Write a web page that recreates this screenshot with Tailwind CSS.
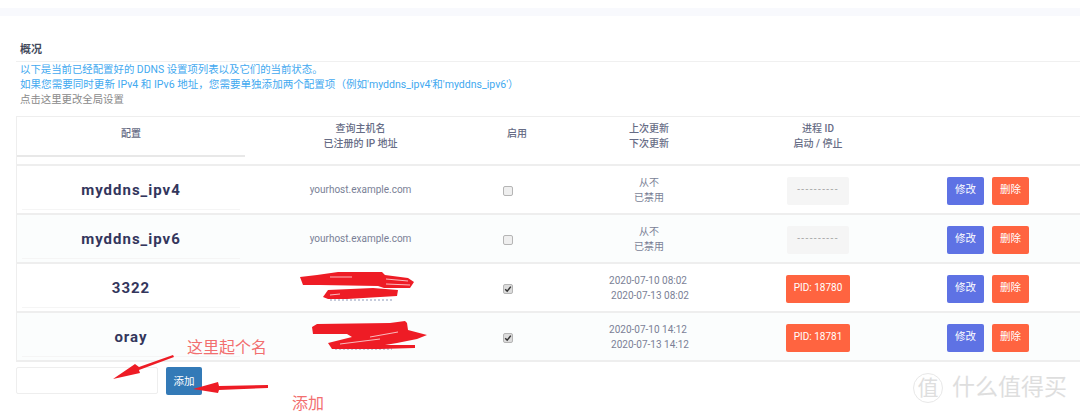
<!DOCTYPE html>
<html lang="en">
<head>
    <meta charset="UTF-8">
    <title>DDNS</title>
    <script src="https://cdn.jsdelivr.net/npm/@tailwindcss/browser@4"></script>
</head>
<body class="relative h-[412px] w-[1080px] overflow-hidden bg-white font-['Roboto','Noto_Sans_CJK_SC',sans-serif] text-[10px] leading-[15px] text-[#7a7f96]">
    <div class="mt-[8px] h-[8px] bg-[#f8f9fd]"></div>

    <h3 class="ml-[20px] mt-[26px] text-[11px] font-bold leading-[15px] text-[#444a5c]">概况</h3>
    <div class="ml-[16px] mt-[4px] border-t border-[#f0f0f0] pl-[4px] text-[10.4px]">
        <p class="text-[#42a9f0]">以下是当前已经配置好的 DDNS 设置项列表以及它们的当前状态。</p>
        <p class="text-[10.55px] text-[#42a9f0]">如果您需要同时更新 IPv4 和 IPv6 地址，您需要单独添加两个配置项（例如'myddns_ipv4'和'myddns_ipv6'）</p>
        <p class="text-[#8a8a8a]">点击这里更改全局设置</p>
    </div>

    <div class="ml-[16px] mt-[9px] border-t border-l border-[#eeeeee] text-center leading-[14.5px]">
        <!-- header -->
        <div class="grid h-[49px] grid-cols-[228px_231px_64px_218px_120px_1fr] items-center border-b-2 border-[#eeeeee] font-medium text-[#666c85]">
            <div class="flex h-[40px] items-center justify-center self-start border-b-2 border-[#e8e8e8] pb-[4px]">配置</div>
            <div class="self-start pt-[5px]"><p>查询主机名</p><p>已注册的 IP 地址</p></div>
            <div class="-mt-[13px] pl-[18px]">启用</div>
            <div class="self-start pt-[5px]"><p>上次更新</p><p>下次更新</p></div>
            <div class="self-start pt-[5px]"><p>进程 ID</p><p>启动 / 停止</p></div>
            <div></div>
        </div>

        <!-- rows -->
        <div class="grid h-[49px] grid-cols-[228px_231px_64px_218px_120px_1fr] items-center border-b-2 border-[#eeeeee] pt-[2px]">
            <div class="h-full pb-[3px] pl-[5px] pr-[5px]"><div class="flex h-full items-center justify-center border-b border-[#f5f5f5] pt-[4px] text-[15px] font-bold tracking-[1px] text-[#33365c]">myddns_ipv4</div></div>
            <div>yourhost.example.com</div>
            <div class="flex justify-center"><span class="block size-[10px] rounded-[2px] border border-[#b5b5b5] bg-[#efefef]"></span></div>
            <div><p>从不</p><p>已禁用</p></div>
            <div class="flex justify-center"><div class="flex h-[28px] w-[62px] items-center justify-center rounded-[2px] bg-[#f5f5f5] tracking-[1.4px] text-[#a5a5a5]">----------</div></div>
            <div class="flex justify-end gap-[8px] pr-[51px] text-[10.5px]"><a class="flex h-[28px] w-[37px] items-center justify-center rounded-[2px] bg-[#5e72e4] text-white">修改</a><a class="flex h-[28px] w-[37px] items-center justify-center rounded-[2px] bg-[#ff6440] text-white">删除</a></div>
        </div>
        <div class="grid h-[49px] grid-cols-[228px_231px_64px_218px_120px_1fr] items-center border-b-2 border-[#eeeeee] bg-[#fbfdfd] pt-[2px]">
            <div class="h-full pb-[3px] pl-[5px] pr-[5px]"><div class="flex h-full items-center justify-center border-b border-[#f5f5f5] pt-[4px] text-[15px] font-bold tracking-[1px] text-[#33365c]">myddns_ipv6</div></div>
            <div>yourhost.example.com</div>
            <div class="flex justify-center"><span class="block size-[10px] rounded-[2px] border border-[#b5b5b5] bg-[#efefef]"></span></div>
            <div><p>从不</p><p>已禁用</p></div>
            <div class="flex justify-center"><div class="flex h-[28px] w-[62px] items-center justify-center rounded-[2px] bg-[#f5f5f5] tracking-[1.4px] text-[#a5a5a5]">----------</div></div>
            <div class="flex justify-end gap-[8px] pr-[51px] text-[10.5px]"><a class="flex h-[28px] w-[37px] items-center justify-center rounded-[2px] bg-[#5e72e4] text-white">修改</a><a class="flex h-[28px] w-[37px] items-center justify-center rounded-[2px] bg-[#ff6440] text-white">删除</a></div>
        </div>
        <div class="grid h-[49px] grid-cols-[228px_231px_64px_218px_120px_1fr] items-center border-b-2 border-[#eeeeee] pt-[2px]">
            <div class="h-full pb-[3px] pl-[5px] pr-[5px]"><div class="flex h-full items-center justify-center border-b border-[#f5f5f5] pt-[4px] text-[15px] font-bold tracking-[1px] text-[#33365c]">3322</div></div>
            <div></div>
            <div class="flex justify-center"><span class="flex size-[10px] items-center justify-center rounded-[2px] border border-[#b5b5b5] bg-[#dcdcdc]"><svg viewBox="0 0 10 10" class="size-[8px]"><path d="M1.5 5.2 4 7.8 8.5 2" fill="none" stroke="#333" stroke-width="1.8"/></svg></span></div>
            <div><p class="-translate-x-[1px]">2020-07-10 08:02</p><p class="translate-x-[1px]">2020-07-13 08:02</p></div>
            <div class="flex justify-center"><div class="flex h-[28px] w-[64px] items-center justify-center rounded-[2px] bg-[#ff6440] text-white">PID: 18780</div></div>
            <div class="flex justify-end gap-[8px] pr-[51px] text-[10.5px]"><a class="flex h-[28px] w-[37px] items-center justify-center rounded-[2px] bg-[#5e72e4] text-white">修改</a><a class="flex h-[28px] w-[37px] items-center justify-center rounded-[2px] bg-[#ff6440] text-white">删除</a></div>
        </div>
        <div class="grid h-[49px] grid-cols-[228px_231px_64px_218px_120px_1fr] items-center border-b-2 border-[#eeeeee] bg-[#fbfdfd] pt-[2px]">
            <div class="h-full pb-[3px] pl-[5px] pr-[5px]"><div class="flex h-full items-center justify-center border-b border-[#f5f5f5] pt-[4px] text-[15px] font-bold tracking-[1px] text-[#33365c]">oray</div></div>
            <div></div>
            <div class="flex justify-center"><span class="flex size-[10px] items-center justify-center rounded-[2px] border border-[#b5b5b5] bg-[#dcdcdc]"><svg viewBox="0 0 10 10" class="size-[8px]"><path d="M1.5 5.2 4 7.8 8.5 2" fill="none" stroke="#333" stroke-width="1.8"/></svg></span></div>
            <div><p class="-translate-x-[1px]">2020-07-10 14:12</p><p class="translate-x-[1px]">2020-07-13 14:12</p></div>
            <div class="flex justify-center"><div class="flex h-[28px] w-[64px] items-center justify-center rounded-[2px] bg-[#ff6440] text-white">PID: 18781</div></div>
            <div class="flex justify-end gap-[8px] pr-[51px] text-[10.5px]"><a class="flex h-[28px] w-[37px] items-center justify-center rounded-[2px] bg-[#5e72e4] text-white">修改</a><a class="flex h-[28px] w-[37px] items-center justify-center rounded-[2px] bg-[#ff6440] text-white">删除</a></div>
        </div>
    </div>

    <div class="ml-[16px] mt-[5px] flex gap-[8px]">
        <input class="h-[27px] w-[142px] rounded-[2px] border border-[#eeeeee] bg-white">
        <button class="h-[28px] w-[36px] rounded-[2px] bg-[#337ab7] text-[10.5px] text-white">添加</button>
    </div>

    <!-- hand drawn annotations on top of the screenshot -->
    <svg class="absolute left-0 top-0" width="1080" height="412" viewBox="0 0 1080 412">
        <g fill="none" stroke="#8c97b8" stroke-width="1" stroke-dasharray="2 2">
            <path d="M330 300H394"/>
            <path d="M335 349H392"/>
        </g>
        <g fill="#ee1c25">
            <path d="M300 277 L317 275 L338 272 L382 272 L385 275 L408 278 L414 282 L410 288 L384 288 L378 286 L320 285 L303 285Z"/>
            <path d="M323 297 L328 290 L373 288 L398 290 L397 296 L347 299 L328 299Z"/>
            <path d="M312 327 L317 324 L390 323 L405 321 L407 323 L408 330 L427 335 L417 339 L397 343 L385 345 L415 345 L415 348 L380 349 L332 349 L328 343 L352 337 L347 334 L313 334Z"/>
            <path d="M173 355 L139 367 L135 364 L113 379 L140 373 L139 370 L174 357Z"/>
            <path d="M193 389 L218 382 L219 386 L268 385 L268 388 L219 390 L218 393Z"/>
        </g>
        <g fill="none" stroke="#fff" stroke-width="0.7">
            <path d="M386 279 L408 281"/>
            <path d="M386 284 L410 285"/>
            <path d="M330 277 L352 277"/>
            <path d="M330 295 L340 294"/>
            <path d="M370 337 L398 332"/>
            <path d="M340 344 L380 339"/>
        </g>
    </svg>
    <div class="absolute left-[187px] top-[337px] font-['Liberation_Serif','Noto_Sans_CJK_SC',serif] text-[16px] leading-[22px] text-[#f26f6f]">这里起个名</div>
    <div class="absolute left-[292px] top-[393px] font-['Liberation_Serif','Noto_Sans_CJK_SC',serif] text-[16px] leading-[22px] text-[#f26f6f]">添加</div>

    <!-- watermark -->
    <div class="absolute left-[913px] top-[373px] flex items-center gap-[9px] text-[#dedede]">
        <div class="flex size-[30px] items-center justify-center rounded-full border border-[#e8e8e8] text-[21px] leading-none">值</div>
        <div class="text-[23px] leading-[30px]">什么值得买</div>
    </div>
</body>
</html>
